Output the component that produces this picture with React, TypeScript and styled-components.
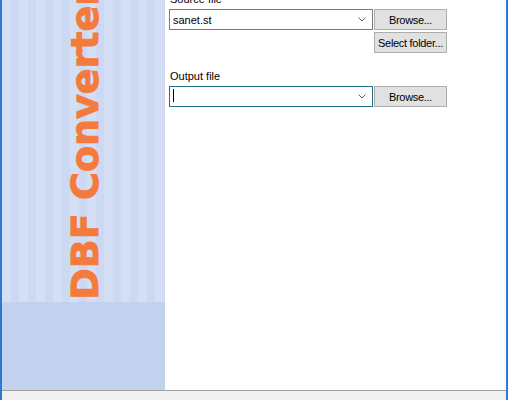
import styled, { createGlobalStyle } from 'styled-components';

const GlobalStyle = createGlobalStyle`
  html, body {
    margin: 0;
    padding: 0;
    background: #ffffff;
  }
`;

const Window = styled.div`
  width: 508px;
  height: 400px;
  box-sizing: border-box;
  border-left: 2px solid #2b7ad2;
  border-right: 2px solid #2b7ad2;
  display: flex;
  flex-direction: column;
  overflow: hidden;
  font-family: 'Liberation Sans', Arial, sans-serif;
`;

const Body = styled.div`
  height: 390px;
  display: flex;
`;

const SidePanel = styled.div`
  width: 163px;
  flex-shrink: 0;
  display: flex;
  flex-direction: column;
  background: #c3d1ee;
`;

const Stripes = styled.div`
  height: 302px;
  flex-shrink: 0;
  overflow: hidden;
  display: flex;
  flex-direction: column;
  justify-content: flex-end;
  align-items: flex-start;
  padding: 0 0 2px 64px;
  box-sizing: border-box;
  background: repeating-linear-gradient(
    90deg,
    #d4dff5 0px,
    #d4dff5 9px,
    #ccd9f3 9px,
    #ccd9f3 17px
  );
`;

const Banner = styled.div`
  writing-mode: vertical-rl;
  transform: rotate(180deg);
  white-space: nowrap;
  flex-shrink: 0;
  font-family: 'DejaVu Sans', Verdana, sans-serif;
  font-weight: bold;
  font-size: 38px;
  line-height: 38px;
  color: #f47b3b;
  -webkit-text-stroke: 1px #f47b3b;
`;

const Content = styled.div`
  flex: 1;
  background: #ffffff;
  padding-left: 4px;
`;

const Form = styled.div`
  margin-top: -8px;
  display: flex;
  flex-direction: column;
`;

const Label = styled.div<{ $gap?: number }>`
  font-size: 11px;
  line-height: 15px;
  color: #000000;
  padding-left: 1px;
  margin-top: ${({ $gap }) => $gap ?? 0}px;
  margin-bottom: 2px;
`;

const Row = styled.div`
  display: flex;
  gap: 1px;
  margin-bottom: 2px;
`;

const Combo = styled.div<{ $focused?: boolean }>`
  width: 204px;
  height: 21px;
  box-sizing: border-box;
  border: 1px solid ${({ $focused }) => ($focused ? '#23708c' : '#7a7a7a')};
  display: flex;
  align-items: center;
  padding: 0 5px 0 3px;
  font-size: 11px;
  color: #000000;
`;

const ComboText = styled.span`
  flex: 1;
  white-space: nowrap;
`;

const Caret = styled.span`
  display: inline-block;
  width: 1px;
  height: 13px;
  background: #000000;
`;

const Chevron = styled.svg`
  width: 8px;
  height: 5px;
  margin-right: 1px;
`;

const Button = styled.div<{ $offset?: boolean }>`
  width: 73px;
  height: 21px;
  box-sizing: border-box;
  margin-left: ${({ $offset }) => ($offset ? '205px' : '0')};
  background: #e1e1e1;
  border: 1px solid #adadad;
  display: flex;
  align-items: center;
  justify-content: center;
  font-size: 11px;
  color: #000000;
  white-space: nowrap;
  letter-spacing: -0.3px;
`;

const Footer = styled.div`
  flex: 1;
  border-top: 1px solid #a0a0a0;
  background: #f0f0f0;
`;

const ChevronIcon = () => (
  <Chevron viewBox="0 0 8 5">
    <path d="M0.5 0.5 L4 4 L7.5 0.5" fill="none" stroke="#606060" strokeWidth="1" />
  </Chevron>
);

const App = () => {
  return (
    <>
      <GlobalStyle />
      <Window>
        <Body>
          <SidePanel>
            <Stripes>
              <Banner>DBF Converter</Banner>
            </Stripes>
          </SidePanel>
          <Content>
            <Form>
              <Label>Source file</Label>
              <Row>
                <Combo>
                  <ComboText>sanet.st</ComboText>
                  <ChevronIcon />
                </Combo>
                <Button>Browse...</Button>
              </Row>
              <Row>
                <Button $offset>Select folder...</Button>
              </Row>
              <Label $gap={14}>Output file</Label>
              <Row>
                <Combo $focused>
                  <ComboText>
                    <Caret />
                  </ComboText>
                  <ChevronIcon />
                </Combo>
                <Button>Browse...</Button>
              </Row>
            </Form>
          </Content>
        </Body>
        <Footer />
      </Window>
    </>
  );
};

export default App;
